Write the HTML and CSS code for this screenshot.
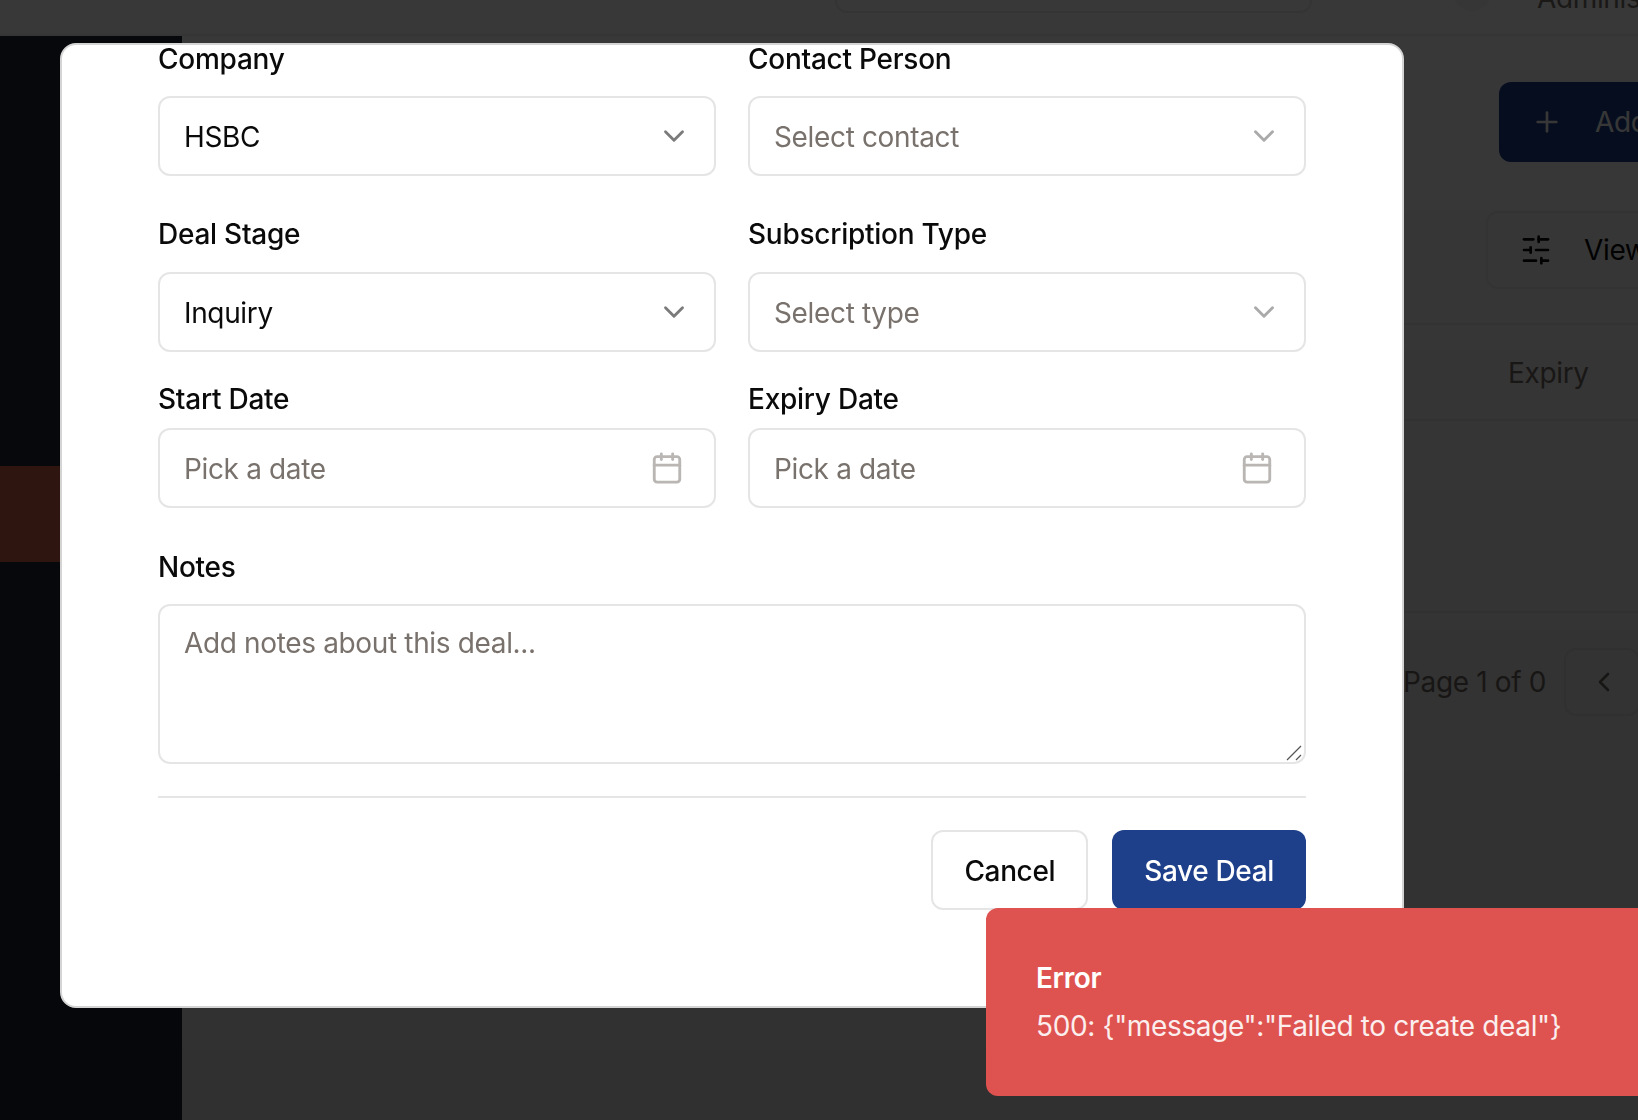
FILE: index.html
```html
<!DOCTYPE html>
<html lang="en">
<head>
  <meta charset="UTF-8">
  <meta name="viewport" content="width=device-width, initial-scale=1.0">
  <title>Deals</title>
  <link rel="stylesheet" href="styles.css">
</head>
<body>
  <!-- dimmed app behind the dialog -->
  <div class="app">
    <header class="topbar">
      <div class="search"></div>
      <div class="avatar"></div>
      <span class="user-name">Administrator</span>
    </header>
    <div class="app-body">
      <aside class="sidebar">
        <div class="nav-active"></div>
      </aside>
      <main class="content">
        <button class="add-btn" type="button">
          <svg class="add-icon" viewBox="0 0 24 24" fill="none" stroke="currentColor" stroke-width="2" stroke-linecap="round" stroke-linejoin="round"><path d="M5 12h14"/><path d="M12 5v14"/></svg>
          <span>Add Deal</span>
        </button>
        <button class="view-btn" type="button">
          <svg class="view-icon" viewBox="0 0 24 24" fill="none" stroke="currentColor" stroke-width="2" stroke-linecap="round" stroke-linejoin="round"><path d="M21 4h-7"/><path d="M10 4H3"/><path d="M21 12h-9"/><path d="M8 12H3"/><path d="M21 20h-5"/><path d="M12 20H3"/><path d="M14 2v4"/><path d="M8 10v4"/><path d="M16 18v4"/></svg>
          <span>View</span>
        </button>
        <div class="table-head"><span>Expiry</span></div>
        <div class="table-empty"></div>
        <div class="pager">
          <span>Page 1 of 0</span>
          <button class="pager-btn" type="button">
            <svg class="pager-icon" viewBox="0 0 24 24" fill="none" stroke="currentColor" stroke-width="2" stroke-linecap="round" stroke-linejoin="round"><path d="m15 18-6-6 6-6"/></svg>
          </button>
        </div>
      </main>
    </div>
  </div>

  <div class="overlay"></div>

  <div class="modal">
    <form class="deal-form">
      <div class="form-row">
        <div class="field">
          <label>Company</label>
          <button class="control" type="button">
            <span>HSBC</span>
            <svg class="chevron" viewBox="0 0 24 24" fill="none" stroke="currentColor" stroke-width="2" stroke-linecap="round" stroke-linejoin="round"><path d="m6 9 6 6 6-6"/></svg>
          </button>
        </div>
        <div class="field">
          <label>Contact Person</label>
          <button class="control is-empty" type="button">
            <span>Select contact</span>
            <svg class="chevron" viewBox="0 0 24 24" fill="none" stroke="currentColor" stroke-width="2" stroke-linecap="round" stroke-linejoin="round"><path d="m6 9 6 6 6-6"/></svg>
          </button>
        </div>
      </div>

      <div class="form-row">
        <div class="field">
          <label>Deal Stage</label>
          <button class="control" type="button">
            <span>Inquiry</span>
            <svg class="chevron" viewBox="0 0 24 24" fill="none" stroke="currentColor" stroke-width="2" stroke-linecap="round" stroke-linejoin="round"><path d="m6 9 6 6 6-6"/></svg>
          </button>
        </div>
        <div class="field">
          <label>Subscription Type</label>
          <button class="control is-empty" type="button">
            <span>Select type</span>
            <svg class="chevron" viewBox="0 0 24 24" fill="none" stroke="currentColor" stroke-width="2" stroke-linecap="round" stroke-linejoin="round"><path d="m6 9 6 6 6-6"/></svg>
          </button>
        </div>
      </div>

      <div class="form-row dates">
        <div class="field">
          <label>Start Date</label>
          <button class="control is-empty is-date" type="button">
            <span>Pick a date</span>
            <svg class="calendar" viewBox="0 0 24 24" fill="none" stroke="currentColor" stroke-width="2" stroke-linecap="round" stroke-linejoin="round"><path d="M8 2v4"/><path d="M16 2v4"/><rect width="18" height="18" x="3" y="4" rx="2"/><path d="M3 10h18"/></svg>
          </button>
        </div>
        <div class="field">
          <label>Expiry Date</label>
          <button class="control is-empty is-date" type="button">
            <span>Pick a date</span>
            <svg class="calendar" viewBox="0 0 24 24" fill="none" stroke="currentColor" stroke-width="2" stroke-linecap="round" stroke-linejoin="round"><path d="M8 2v4"/><path d="M16 2v4"/><rect width="18" height="18" x="3" y="4" rx="2"/><path d="M3 10h18"/></svg>
          </button>
        </div>
      </div>

      <div class="field notes">
        <label for="notes">Notes</label>
        <div class="notes-box">
          <textarea id="notes" placeholder="Add notes about this deal..."></textarea>
          <svg class="grip" viewBox="0 0 16 16" fill="none" stroke="#555" stroke-width="1.2"><path d="M1 15 15 1"/><path d="M10 15l5-5"/></svg>
        </div>
      </div>

      <div class="form-actions">
        <button class="btn btn-cancel" type="button">Cancel</button>
        <button class="btn btn-save" type="button">Save Deal</button>
      </div>
    </form>
  </div>

  <div class="toast">
    <div class="toast-title">Error</div>
    <div class="toast-text">500: {"message":"Failed to create deal"}</div>
  </div>
</body>
</html>
```

FILE: styles.css
```css
* {
  box-sizing: border-box;
}

body {
  margin: 0;
  height: 1120px;
  overflow: hidden;
  font-family: Inter, "Noto Sans", sans-serif;
  font-size: 28px;
  letter-spacing: -0.35px;
  color: #0a0a0a;
  background-color: #fff;
}

button {
  font-family: inherit;
  font-size: 28px;
  letter-spacing: inherit;
}

/* background app */
.app {
  height: 1120px;
  display: flex;
  flex-direction: column;
  background-color: #fff;
}

.topbar {
  height: 36px;
  flex-shrink: 0;
  display: flex;
  align-items: flex-end;
  padding-left: 835px;
  border-bottom: 2px solid #f0f0f0;
  overflow: hidden;
  white-space: nowrap;
}

.search {
  width: 477px;
  height: 40px;
  flex-shrink: 0;
  margin-bottom: 21px;
  border: 2px solid #eee;
  border-radius: 12px;
}

.avatar {
  width: 40px;
  height: 40px;
  flex-shrink: 0;
  margin: 0 0 23px 140px;
  border-radius: 50%;
  background-color: #f5f5f5;
}

.user-name {
  flex-shrink: 0;
  margin: 0 0 20px 45px;
  line-height: 32px;
  color: #78716c;
}

.app-body {
  flex: 1;
  display: flex;
  min-height: 0;
}

.sidebar {
  width: 182px;
  flex-shrink: 0;
  padding-top: 430px;
  background-color: #1e2838;
}

.nav-active {
  height: 96px;
  background-color: #e06850;
}

.content {
  flex: 1;
  display: flex;
  flex-direction: column;
  overflow: hidden;
  white-space: nowrap;
}

.add-btn {
  display: flex;
  align-items: center;
  gap: 32px;
  width: 340px;
  height: 80px;
  margin: 46px 0 0 1317px;
  padding: 0 32px 0 32px;
  flex-shrink: 0;
  border: 0;
  border-radius: 12px;
  color: #fff;
  background-color: #1e3f8a;
}

.add-icon {
  width: 32px;
  height: 32px;
}

.view-btn {
  display: flex;
  align-items: center;
  gap: 32px;
  width: 240px;
  height: 78px;
  margin: 49px 0 0 1304px;
  padding: 0 32px;
  flex-shrink: 0;
  border: 2px solid #eee;
  border-radius: 12px;
  color: #0a0a0a;
  background-color: #fff;
}

.view-icon {
  width: 32px;
  height: 32px;
}

.table-head {
  height: 98px;
  margin-top: 34px;
  padding: 1px 0 0 1326px;
  flex-shrink: 0;
  display: flex;
  align-items: center;
  border-top: 2px solid #eee;
  border-bottom: 2px solid #eee;
  color: #78716c;
}

.table-empty {
  height: 192px;
  flex-shrink: 0;
  border-bottom: 2px solid #eee;
}

.pager {
  display: flex;
  align-items: center;
  gap: 18px;
  margin: 35px 0 0 1221px;
  color: #78716c;
}

.pager-btn {
  width: 76px;
  height: 68px;
  flex-shrink: 0;
  display: flex;
  align-items: center;
  justify-content: center;
  padding: 0 0 0 4px;
  border: 2px solid #eee;
  border-radius: 12px;
  color: #78716c;
  background-color: #fff;
}

.pager-icon {
  width: 32px;
  height: 32px;
}

.overlay {
  position: fixed;
  inset: 0;
  background: linear-gradient(rgba(0, 0, 0, 0.78), rgba(0, 0, 0, 0.81));
}

/* dialog */
.modal {
  position: fixed;
  left: 60px;
  top: 43px;
  width: 1344px;
  height: 965px;
  padding: 0 96px;
  border: 2px solid #d4d4d4;
  border-radius: 16px;
  background-color: #fff;
}

.form-row {
  display: grid;
  grid-template-columns: 1fr 1fr;
  column-gap: 32px;
  margin-top: 44px;
}

.form-row:first-child {
  margin-top: 0;
}

.form-row.dates {
  margin-top: 33px;
}

.field {
  display: flex;
  flex-direction: column;
  gap: 24px;
}

.form-row:first-child .field {
  gap: 23px;
}

.dates .field {
  gap: 15px;
}

.field label {
  font-weight: 500;
  line-height: 28px;
  letter-spacing: -0.25px;
}

.control {
  display: flex;
  align-items: center;
  justify-content: space-between;
  height: 80px;
  padding: 0 24px;
  border: 2px solid #e5e5e5;
  border-radius: 12px;
  color: #0a0a0a;
  background-color: #fff;
}

.control span {
  padding-top: 2px;
}

.control.is-empty {
  color: #78716c;
}

.control.is-date {
  padding-right: 30px;
}

.chevron {
  width: 34px;
  height: 34px;
  margin-right: -1px;
  color: #7b7b7b;
}

.is-empty .chevron {
  color: #aaa;
}

.calendar {
  width: 34px;
  height: 34px;
  color: #b9b6b4;
}

.notes {
  margin-top: 45px;
  gap: 23px;
}

.notes-box {
  position: relative;
}

.notes textarea {
  display: block;
  width: 100%;
  height: 160px;
  padding: 17px 24px 16px;
  border: 2px solid #e5e5e5;
  border-radius: 12px;
  font-family: inherit;
  font-size: 28px;
  letter-spacing: inherit;
  line-height: 40px;
  resize: none;
  outline: none;
}

.notes textarea::placeholder {
  color: #78716c;
  opacity: 1;
}

.grip {
  position: absolute;
  right: 4px;
  bottom: 3px;
  width: 16px;
  height: 16px;
}

.form-actions {
  display: flex;
  justify-content: flex-end;
  gap: 24px;
  margin-top: 32px;
  padding-top: 32px;
  border-top: 2px solid #e5e5e5;
}

.btn {
  height: 80px;
  padding: 2px 32px 0;
  border-radius: 12px;
  font-weight: 500;
}

.btn-cancel {
  padding: 2px 31px 0;
  border: 2px solid #e5e5e5;
  color: #0a0a0a;
  background-color: #fff;
}

.btn-save {
  border: 0;
  color: #fff;
  background-color: #1e3f8a;
}

/* toast */
.toast {
  position: fixed;
  left: 986px;
  top: 908px;
  width: 720px;
  height: 188px;
  padding: 50px 50px;
  border-radius: 12px;
  color: #fff;
  background-color: #de5350;
}

.toast-title {
  font-weight: 600;
  line-height: 40px;
}

.toast-text {
  margin-top: 8px;
  line-height: 40px;
  opacity: 0.9;
}
```
